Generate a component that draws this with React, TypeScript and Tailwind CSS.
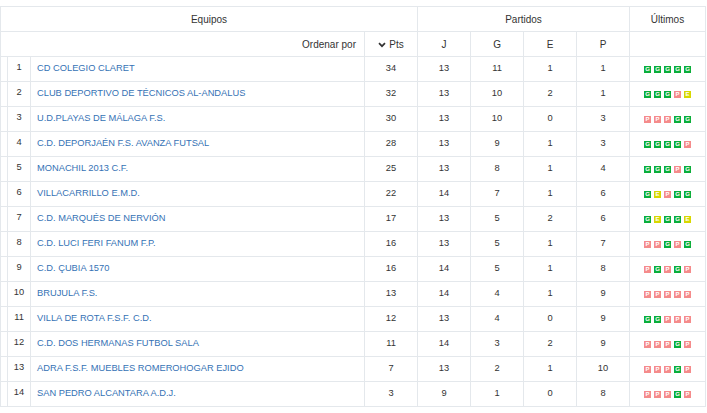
type Result = "G" | "E" | "P";

interface Row {
  pos: number;
  team: string;
  pts: number;
  j: number;
  g: number;
  e: number;
  p: number;
  last: Result[];
}

const ROWS: Row[] = [
  { pos: 1, team: "CD COLEGIO CLARET", pts: 34, j: 13, g: 11, e: 1, p: 1, last: ["G", "G", "G", "G", "G"] },
  { pos: 2, team: "CLUB DEPORTIVO DE TÉCNICOS AL-ANDALUS", pts: 32, j: 13, g: 10, e: 2, p: 1, last: ["G", "G", "G", "P", "E"] },
  { pos: 3, team: "U.D.PLAYAS DE MÁLAGA F.S.", pts: 30, j: 13, g: 10, e: 0, p: 3, last: ["P", "P", "P", "G", "G"] },
  { pos: 4, team: "C.D. DEPORJAÉN F.S. AVANZA FUTSAL", pts: 28, j: 13, g: 9, e: 1, p: 3, last: ["G", "G", "G", "G", "P"] },
  { pos: 5, team: "MONACHIL 2013 C.F.", pts: 25, j: 13, g: 8, e: 1, p: 4, last: ["G", "G", "G", "P", "G"] },
  { pos: 6, team: "VILLACARRILLO E.M.D.", pts: 22, j: 14, g: 7, e: 1, p: 6, last: ["G", "E", "P", "G", "G"] },
  { pos: 7, team: "C.D. MARQUÉS DE NERVIÓN", pts: 17, j: 13, g: 5, e: 2, p: 6, last: ["G", "E", "G", "G", "E"] },
  { pos: 8, team: "C.D. LUCI FERI FANUM F.P.", pts: 16, j: 13, g: 5, e: 1, p: 7, last: ["P", "P", "G", "P", "G"] },
  { pos: 9, team: "C.D. ÇUBIA 1570", pts: 16, j: 14, g: 5, e: 1, p: 8, last: ["P", "G", "P", "G", "P"] },
  { pos: 10, team: "BRUJULA F.S.", pts: 13, j: 14, g: 4, e: 1, p: 9, last: ["P", "P", "P", "P", "P"] },
  { pos: 11, team: "VILLA DE ROTA F.S.F. C.D.", pts: 12, j: 13, g: 4, e: 0, p: 9, last: ["G", "G", "P", "P", "P"] },
  { pos: 12, team: "C.D. DOS HERMANAS FUTBOL SALA", pts: 11, j: 14, g: 3, e: 2, p: 9, last: ["P", "P", "P", "G", "P"] },
  { pos: 13, team: "ADRA F.S.F. MUEBLES ROMEROHOGAR EJIDO", pts: 7, j: 13, g: 2, e: 1, p: 10, last: ["P", "P", "P", "G", "P"] },
  { pos: 14, team: "SAN PEDRO ALCANTARA A.D.J.", pts: 3, j: 9, g: 1, e: 0, p: 8, last: ["P", "P", "P", "G", "P"] },
];

const BADGE: Record<Result, string> = {
  G: "bg-[#0aae3a]",
  E: "bg-[#d8d800]",
  P: "bg-[#f58b8b]",
};

function Badge({ r }: { r: Result }) {
  return (
    <span
      className={`flex h-[7px] w-[7px] items-center justify-center text-[6px] font-bold leading-none text-white ${BADGE[r]}`}
    >
      {r}
    </span>
  );
}

const cell = "border border-[#e4e8ec] h-[25px] p-0";

export default function App() {
  return (
    <div className="bg-white pt-[6px] font-['Liberation_Sans',Arial,sans-serif] text-[#333]">
      <table className="w-[705px] table-fixed border-collapse">
        <colgroup>
          <col className="w-[7px]" />
          <col className="w-[23px]" />
          <col className="w-[334px]" />
          <col className="w-[53px]" />
          <col className="w-[53px]" />
          <col className="w-[53px]" />
          <col className="w-[53px]" />
          <col className="w-[53px]" />
          <col className="w-[76px]" />
        </colgroup>
        <thead className="text-[10px]">
          <tr>
            <th colSpan={4} className={`${cell} text-center font-normal`}>Equipos</th>
            <th colSpan={4} className={`${cell} text-center font-normal`}>Partidos</th>
            <th className={`${cell} text-center font-normal`}>Últimos</th>
          </tr>
          <tr>
            <th colSpan={3} className={`${cell} pr-[8px] text-right font-normal`}>Ordenar por</th>
            <th className={`${cell} text-center font-normal`}>
              <span className="inline-flex items-center gap-[3px]">
                <svg width="8" height="6" viewBox="0 0 8 6" className="mt-[1px]">
                  <path d="M1 1.2 4 4.2 7 1.2" fill="none" stroke="#333" strokeWidth="1.7" />
                </svg>
                Pts
              </span>
            </th>
            <th className={`${cell} text-center font-normal`}>J</th>
            <th className={`${cell} text-center font-normal`}>G</th>
            <th className={`${cell} text-center font-normal`}>E</th>
            <th className={`${cell} text-center font-normal`}>P</th>
            <th className={cell}></th>
          </tr>
        </thead>
        <tbody className="text-[9.3px]">
          {ROWS.map((row) => (
            <tr key={row.pos}>
              <td className={cell}></td>
              <td className={`${cell} pb-[3px] text-center`}>{row.pos}</td>
              <td className={`${cell} pl-[6px] text-[#3572b5]`}>{row.team}</td>
              <td className={`${cell} text-center`}>{row.pts}</td>
              <td className={`${cell} text-center`}>{row.j}</td>
              <td className={`${cell} text-center`}>{row.g}</td>
              <td className={`${cell} text-center`}>{row.e}</td>
              <td className={`${cell} text-center`}>{row.p}</td>
              <td className={cell}>
                <div className="flex items-center justify-center gap-[3px]">
                  {row.last.map((r, i) => (
                    <Badge key={i} r={r} />
                  ))}
                </div>
              </td>
            </tr>
          ))}
        </tbody>
      </table>
    </div>
  );
}
